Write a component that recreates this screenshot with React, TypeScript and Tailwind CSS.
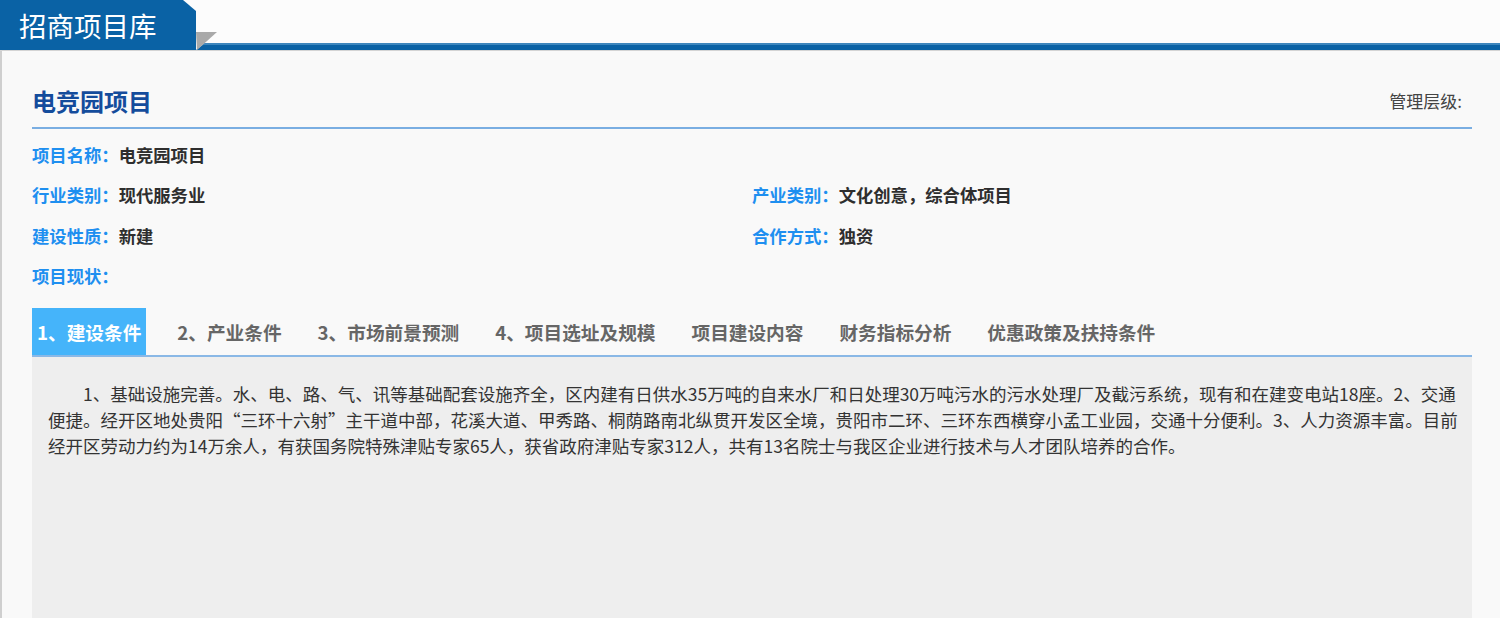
import React from 'react';

const fields: [string, string, string?, string?][] = [
  ['项目名称：', '电竞园项目'],
  ['行业类别：', '现代服务业', '产业类别：', '文化创意，综合体项目'],
  ['建设性质：', '新建', '合作方式：', '独资'],
  ['项目现状：', ''],
];

const tabs = ['1、建设条件', '2、产业条件', '3、市场前景预测', '4、项目选址及规模', '项目建设内容', '财务指标分析', '优惠政策及扶持条件'];

const body =
  '1、基础设施完善。水、电、路、气、讯等基础配套设施齐全，区内建有日供水35万吨的自来水厂和日处理30万吨污水的污水处理厂及截污系统，现有和在建变电站18座。2、交通便捷。经开区地处贵阳“三环十六射”主干道中部，花溪大道、甲秀路、桐荫路南北纵贯开发区全境，贵阳市二环、三环东西横穿小孟工业园，交通十分便利。3、人力资源丰富。目前经开区劳动力约为14万余人，有获国务院特殊津贴专家65人，获省政府津贴专家312人，共有13名院士与我区企业进行技术与人才团队培养的合作。';

export default function App() {
  return (
    <div className="h-[618px] overflow-hidden bg-[#fcfcfc] font-['Noto_Sans_CJK_SC','Noto_Sans',sans-serif] [text-spacing-trim:space-all]">
      {/* header */}
      <div className="relative flex h-[50px]">
        <div className="w-[196px] h-[50px] bg-[#0a62a5] [clip-path:polygon(0_0,183px_0,196px_11px,196px_100%,0_100%)] pl-[19px] text-[27.5px] leading-[50px] text-white">
          招商项目库
        </div>
        <div className="flex flex-1 flex-col justify-end">
          <div className="h-[7px] bg-[#0a62a5] border-t-2 border-[#3d86bd] [clip-path:polygon(9px_0,100%_0,100%_100%,0_100%)]" />
        </div>
        <svg className="absolute left-[196px] top-[32px]" width="22" height="18" viewBox="0 0 22 18">
          <polygon points="0,0 21,0 1,18" fill="#a9a9a9" />
        </svg>
      </div>
      <div className="h-px bg-[#d4d4d4]" />

      {/* content */}
      <div className="border-l-2 border-[#cfcfcf] bg-[#f9f9f9] pl-[30px] pr-[28px] min-h-[600px]">
        <div className="flex items-center justify-between pt-[33px] pb-[10px]">
          <h1 className="text-[24px] leading-[33px] font-bold text-[#144c9c]">电竞园项目</h1>
          <span className="text-[17px] text-[#444] pr-[10px]">管理层级:</span>
        </div>
        <div className="h-[2px] bg-[#7aaee2]" />

        <div className="mt-[6px] text-[17.33px] font-bold leading-[40.33px]">
          {fields.map(([l1, v1, l2, v2]) => (
            <div key={l1} className="flex">
              <div className="w-[720px]">
                <span className="text-[#1e8ff0]">{l1}</span>
                <span className="text-[#2e2e2e]">{v1}</span>
              </div>
              {l2 && (
                <div>
                  <span className="text-[#1e8ff0]">{l2}</span>
                  <span className="text-[#2e2e2e]">{v2}</span>
                </div>
              )}
            </div>
          ))}
        </div>

        <div className="mt-[12px] flex h-[47px] items-stretch gap-[26px]">
          {tabs.map((t, i) => (
            <div
              key={t}
              className={
                i === 0
                  ? 'flex items-center bg-[#45b4fa] px-[5px] text-[18.67px] font-bold text-white'
                  : 'flex items-center px-[5px] text-[18.67px] font-bold text-[#666]'
              }
            >
              {t}
            </div>
          ))}
        </div>
        <div className="h-[2px] bg-[#8ab8e6]" />

        <div className="min-h-[300px] bg-[#eeeeee] pl-[16px] pr-[9px] pt-[24px] text-[17.5px] leading-[26px] text-[#333]">
          <p className="indent-[35px]">{body}</p>
        </div>
      </div>
    </div>
  );
}
